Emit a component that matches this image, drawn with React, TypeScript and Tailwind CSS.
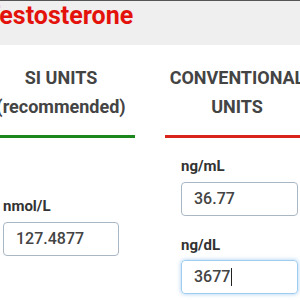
export default function App() {
  return (
    <div className="w-[300px] h-[300px] overflow-hidden bg-white font-['Roboto',sans-serif]">
      <div className="h-[45px] bg-[#efefef] border-t border-[#555] pt-[2px]">
        <div className="ml-[-15px] text-[25px] font-bold text-[#e3120b] leading-none whitespace-nowrap">Testosterone</div>
      </div>
      <div className="flex ml-[-13px] gap-[30px]">
        <div className="w-[148px] shrink-0">
          <div className="pt-[18px] text-center text-[18px] font-bold text-[#444] leading-[29px]">
            <div>SI UNITS</div>
            <div>(recommended)</div>
          </div>
          <div className="mt-[14px] h-[3px] bg-[#1c871c]"></div>
          <div className="px-[16px] pt-[58px]">
            <div className="text-[15px] font-bold text-[#333] leading-[20px]">nmol/L</div>
            <div className="mt-[6px] h-[34px] w-[116px] border border-[#a9b7c4] rounded-[4px] flex items-center pl-[12px] text-[16px] font-medium text-[#444]">127.4877</div>
          </div>
        </div>
        <div className="w-[144px] shrink-0">
          <div className="pt-[18px] text-center text-[18px] font-bold text-[#444] leading-[29px]">
            <div>CONVENTIONAL</div>
            <div>UNITS</div>
          </div>
          <div className="mt-[14px] h-[3px] bg-[#d9231d]"></div>
          <div className="px-[16px] pt-[18px]">
            <div className="text-[15px] font-bold text-[#333] leading-[20px]">ng/mL</div>
            <div className="mt-[6px] h-[34px] w-[117px] border border-[#a9b7c4] rounded-[4px] flex items-center pl-[12px] text-[16px] font-medium text-[#444]">36.77</div>
            <div className="mt-[19px] text-[15px] font-bold text-[#333] leading-[20px]">ng/dL</div>
            <div className="mt-[5px] h-[34px] w-[117px] border border-[#9fcdf0] rounded-[4px] shadow-[0_0_4px_rgba(90,160,225,0.55)] flex items-center pl-[12px] text-[16px] font-medium text-[#444]">
              3677<span className="inline-block w-[1px] h-[18px] bg-[#222] ml-[1px]"></span>
            </div>
          </div>
        </div>
      </div>
    </div>
  );
}
